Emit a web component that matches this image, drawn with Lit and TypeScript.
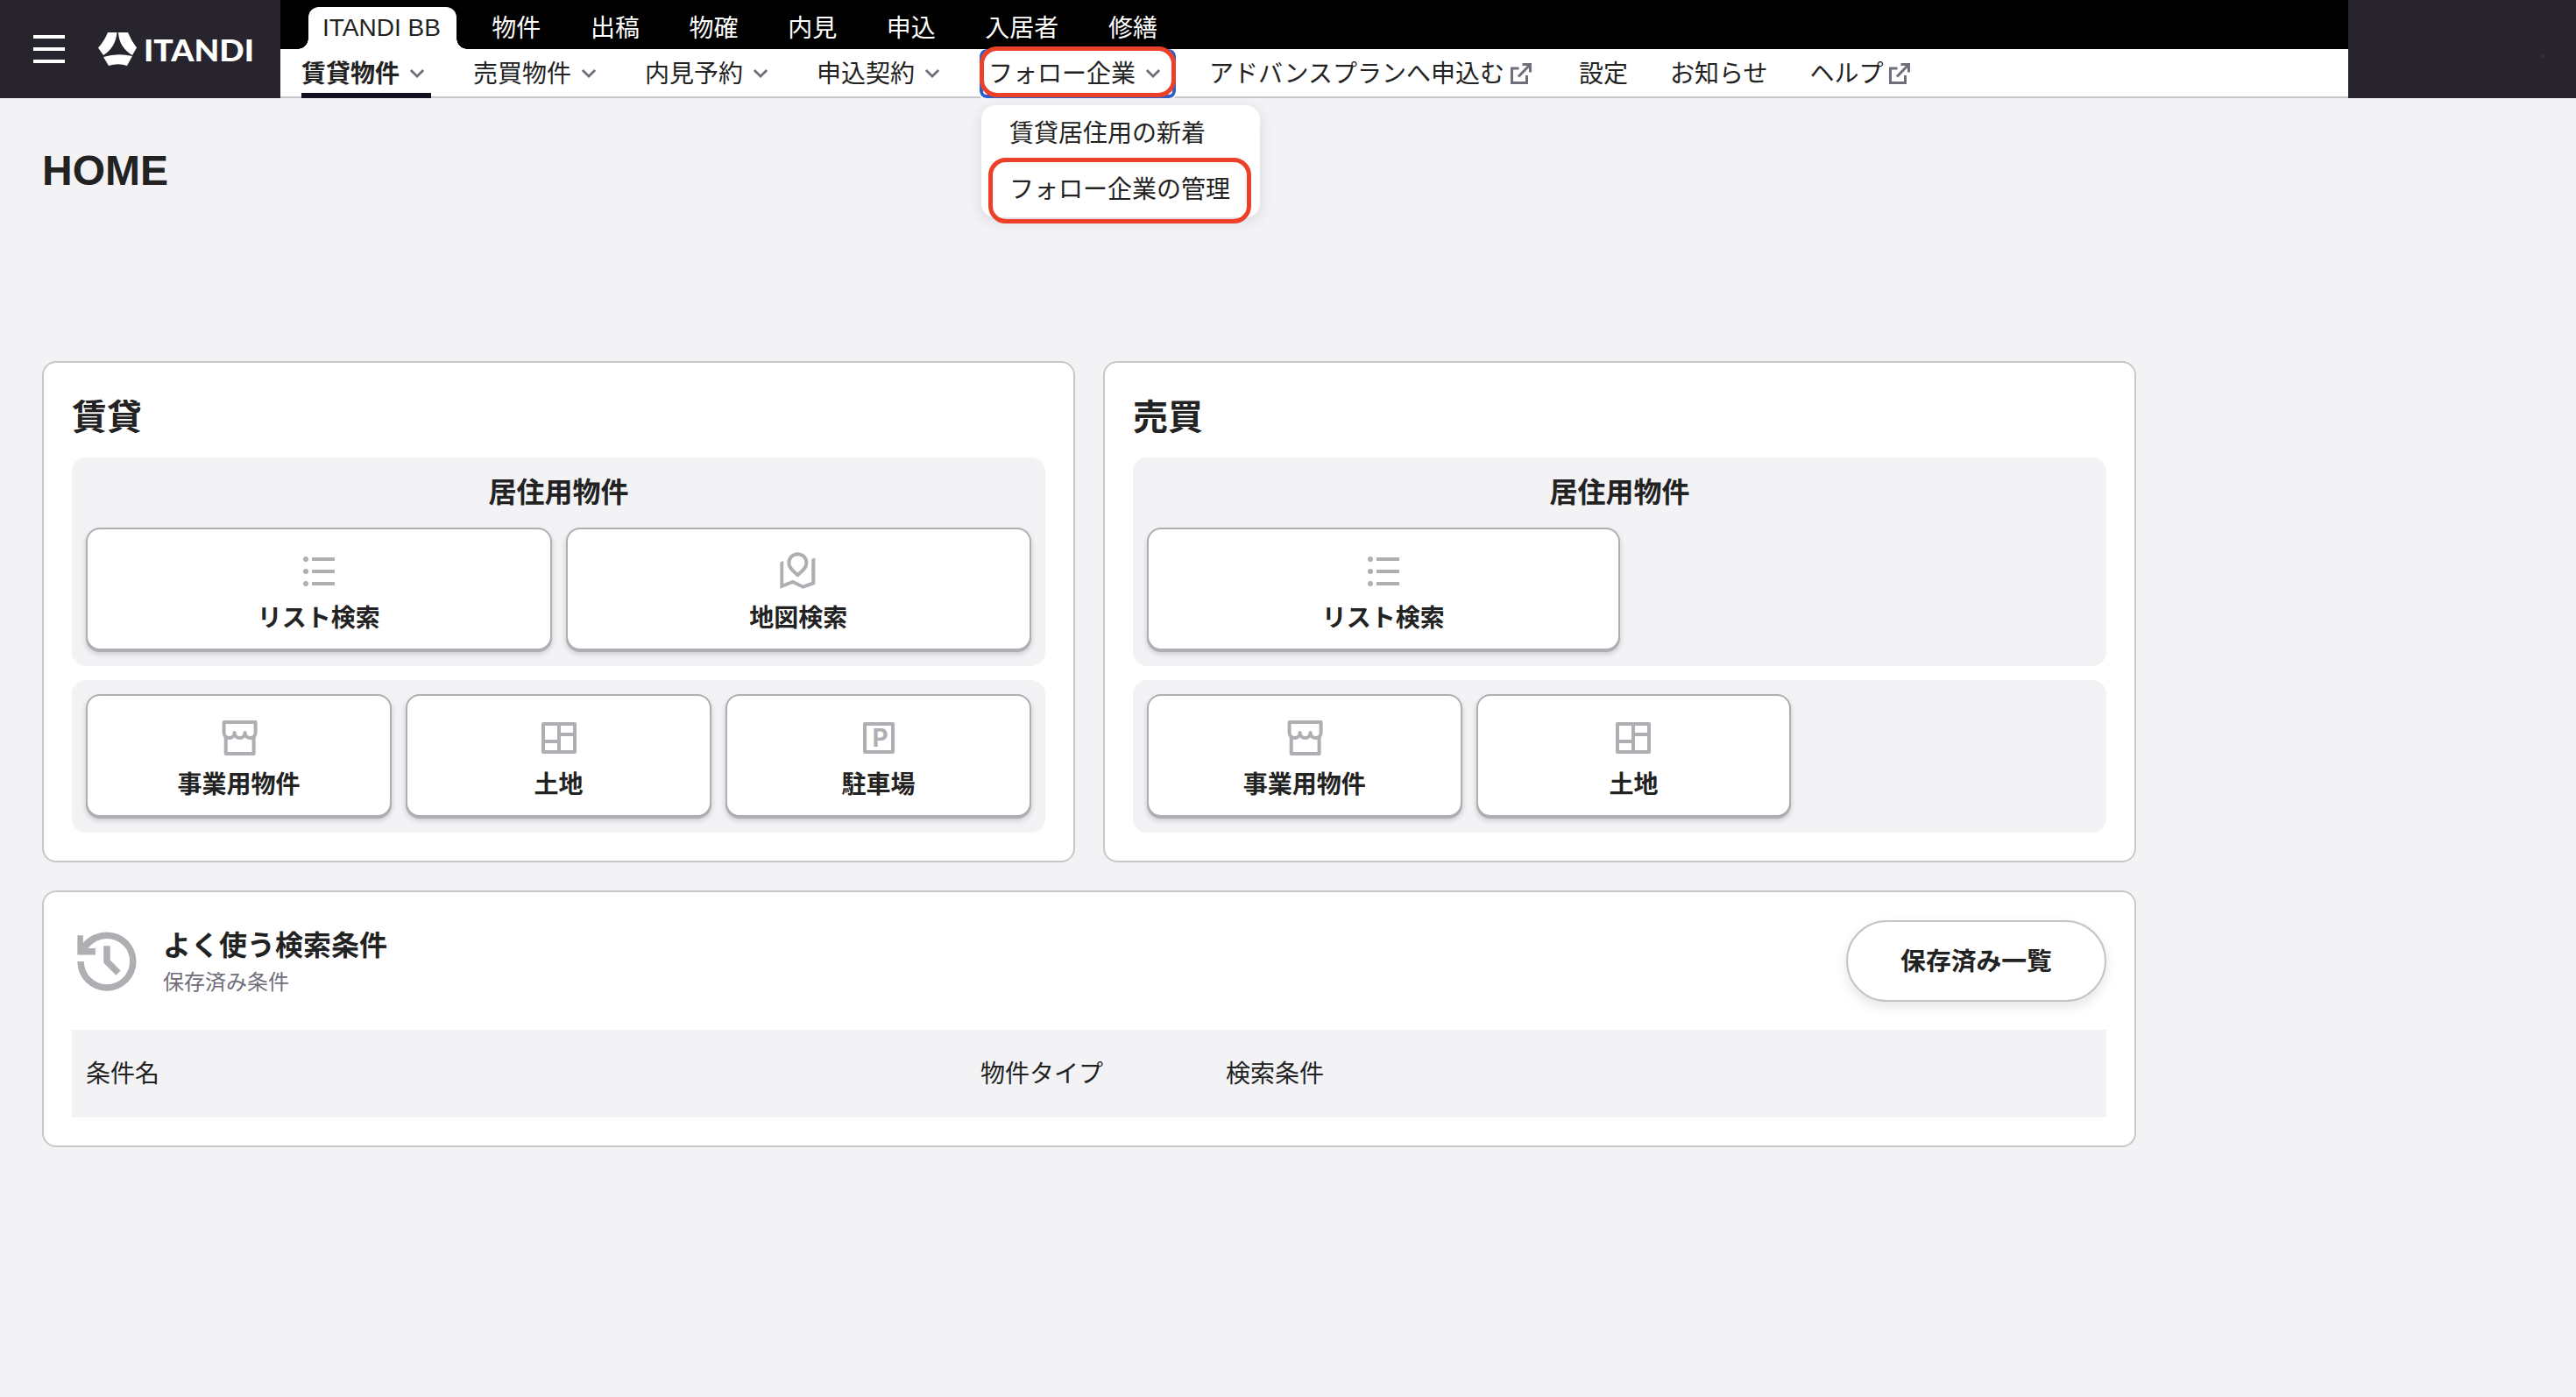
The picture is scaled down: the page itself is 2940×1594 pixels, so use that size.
import { LitElement, html, css, svg } from 'lit';
import { customElement, property } from 'lit/decorators.js';

const icons = {
  list: svg`
    <circle cx="9" cy="10" r="3" /><circle cx="9" cy="24" r="3" /><circle cx="9" cy="38" r="3" />
    <path d="M16 8h26v4H16zM16 22h26v4H16zM16 36h26v4H16z" />
  `,
  map: svg`
    <path class="line" d="M23.4 4.2c-5.8 0-10 4.5-10 10.2 0 5.8 4.6 8.6 10 13.8 5.4-5.2 10-8 10-13.8 0-5.7-4.2-10.2-10-10.2z" />
    <path d="M3.4 13.5l3.8-1.500v26l10.5-4.200 11.8 5.700 9.700-3.500V10l4.200-1.500v30.200l-13.900 5-11.800-5.700-14.300 5.700z" />
  `,
  store: svg`
    <path class="line" d="M6.6 6h36v12a6 6 0 0 1-12 0 6 6 0 0 1-12 0 6 6 0 0 1-12 0z" />
    <path class="line" d="M8.7 22v20h31.9V22" />
  `,
  land: svg`<path class="line" d="M6 8h36v32H6zM24 8v32M24 20h18M6 28h18" />`,
  parking: svg`
    <path class="line" d="M8 8h32v32H8z" />
    <text x="16.5" y="34">P</text>
  `
};

@customElement('menu-button')
export class MenuButton extends LitElement {
  @property() icon = 'list';
  @property() label = '';

  static styles = css`
    :host {
      display: flex;
      flex-direction: column;
      align-items: center;
      height: 140px;
      box-sizing: border-box;
      padding-top: 24px;
      border: 2px solid #aeaeb3;
      border-radius: 16px;
      background: #fff;
      box-shadow: 0 2px 0 #aeaeb3, 0 4px 6px rgba(0, 0, 0, 0.18);
      cursor: pointer;
    }

    svg {
      width: 48px;
      height: 48px;
      fill: #aeaeb3;
    }

    .line {
      fill: none;
      stroke: #aeaeb3;
      stroke-width: 4;
      stroke-linejoin: round;
    }

    text {
      font: 700 28px 'Inter', sans-serif;
    }

    .label {
      margin-top: 8px;
      font-size: 28px;
      line-height: 43px;
      font-weight: 700;
    }
  `;

  render() {
    return html`
      <svg viewBox="0 0 48 48">${icons[this.icon]}</svg>
      <span class="label">${this.label}</span>
    `;
  }
}

@customElement('app-header')
export class AppHeader extends LitElement {
  tabs = ['ITANDI BB', '物件', '出稿', '物確', '内見', '申込', '入居者', '修繕'];

  links = [
    { name: '賃貸物件', type: 'menu', active: true },
    { name: '売買物件', type: 'menu' },
    { name: '内見予約', type: 'menu' },
    { name: '申込契約', type: 'menu' },
    { name: 'フォロー企業', type: 'menu', children: ['賃貸居住用の新着', 'フォロー企業の管理'] },
    { name: 'アドバンスプランへ申込む', type: 'external' },
    { name: '設定' },
    { name: 'お知らせ' },
    { name: 'ヘルプ', type: 'external' }
  ];

  static styles = css`
    :host {
      display: flex;
      height: 112px;
      background: #27242e;
      font-size: 28px;
      white-space: nowrap;
    }

    .brand {
      display: flex;
      align-items: center;
      width: 320px;
      box-sizing: border-box;
      padding-left: 38px;
    }

    .burger {
      display: flex;
      flex-direction: column;
      gap: 10px;
      width: 36px;
      margin-right: 38px;
    }

    .burger i {
      height: 4px;
      background: #fff;
    }

    .logo {
      width: 180px;
      height: 40px;
      fill: #fff;
    }

    .logo text {
      font: 900 35px 'Lato', sans-serif;
    }

    .nav {
      flex: 1;
    }

    .tabs {
      display: flex;
      height: 48px;
      padding: 8px 0 0 32px;
      background: #000;
      color: #fff;
      line-height: 48px;
    }

    .tab {
      padding: 1px 28.3px 0;
    }

    .tab.active {
      position: relative;
      width: 169px;
      height: 48px;
      box-sizing: border-box;
      margin-right: 12px;
      padding: 0 0 0 16px;
      border-radius: 12px 12px 0 0;
      background: #fff;
      color: #222;
    }

    .tab.active::before,
    .tab.active::after {
      content: '';
      position: absolute;
      bottom: 0;
      width: 12px;
      height: 12px;
    }

    .tab.active::before {
      right: 100%;
      background: radial-gradient(circle at 0 0, transparent 11.5px, #fff 12px);
    }

    .tab.active::after {
      left: 100%;
      background: radial-gradient(circle at 100% 0, transparent 11.5px, #fff 12px);
    }

    .links {
      display: flex;
      gap: 48px;
      height: 56px;
      padding-left: 24px;
      background: #fff;
      box-shadow: inset 0 -2px #c8c7ce;
      line-height: 56px;
    }

    .link {
      position: relative;
      display: flex;
      align-items: center;
    }

    .link.active {
      font-weight: 700;
      box-shadow: inset 0 -6px #151020;
    }

    .link > span {
      padding-top: 2px;
    }

    .chevron {
      width: 24px;
      height: 24px;
      margin: 0 4px 0 8px;
      fill: none;
      stroke: #6f6e79;
      stroke-width: 2.7;
    }

    .external {
      width: 24px;
      height: 24px;
      margin: 0 6px 0 7px;
      fill: none;
      stroke: #6f6e79;
      stroke-width: 3;
    }

    .focus {
      position: absolute;
      inset: 0 -10px;
      border: 4px solid #2a5fcb;
      border-top-width: 2px;
      border-radius: 8px;
      outline: 2px solid #fff;
      clip-path: inset(0 -2px);
    }

    .mark {
      position: absolute;
      border: 5px solid #ec4128;
      border-radius: 20px;
    }

    .link > .mark {
      inset: -3px -10px 1px;
    }

    .menu {
      position: absolute;
      top: 64px;
      left: -8px;
      width: 318px;
      height: 127px;
      padding-top: 1px;
      border-radius: 16px;
      background: #fff;
      box-shadow: 0 4px 16px rgba(30, 25, 50, 0.12);
      line-height: 64px;
    }

    .menu-item {
      position: relative;
      padding-left: 32px;
    }

    .menu-item .mark {
      inset: -5px 10px -6px 8px;
    }

    .side {
      display: flex;
      align-items: flex-start;
      justify-content: flex-end;
      width: 260px;
      box-sizing: border-box;
      padding: 62px 37px 0 0;
    }

    .side i {
      width: 1px;
      height: 4px;
      background: #4b4853;
    }
  `;

  render() {
    return html`
      <div class="brand">
        <div class="burger"><i></i><i></i><i></i></div>
        <svg class="logo" viewBox="0 0 180 40">
          <path d="M11 1h10.5q-1.500 17-15.500 26L0 18.500Q7 11 11 1z" />
          <path d="M23 1h11q4 10 10 17.500L39 27Q24 18 23 1z" />
          <path d="M6 29q16-5 33-1l-6 11q-10-3.500-21 0z" />
          <text x="52" y="33.500" textLength="126" lengthAdjust="spacingAndGlyphs">ITANDI</text>
        </svg>
      </div>
      <div class="nav">
        <div class="tabs">
          ${this.tabs.map((tab, i) => html`<span class="tab ${i === 0 ? 'active' : ''}">${tab}</span>`)}
        </div>
        <div class="links">${this.links.map(link => this._renderLink(link))}</div>
      </div>
      <div class="side"><i></i></div>
    `;
  }

  _renderLink(link) {
    return html`
      <div class="link ${link.active ? 'active' : ''}">
        ${link.children ? html`<div class="focus"></div>` : ''}
        <span>${link.name}</span>
        ${link.type === 'menu' ? html`
          <svg class="chevron" viewBox="0 0 24 24"><path d="M4.8 8l7.2 7 7.2-7" /></svg>
        ` : ''}
        ${link.type === 'external' ? html`
          <svg class="external" viewBox="0 0 24 24">
            <path d="M9.500 6h-8v16.500h17V14M13.500 1.500h9V10.500M22 2L9 15.500" />
          </svg>
        ` : ''}
        ${link.children ? html`
          <div class="mark"></div>
          <div class="menu">
            ${link.children.map((name, i) => html`
              <div class="menu-item">${name}${i === 1 ? html`<div class="mark"></div>` : ''}</div>
            `)}
          </div>
        ` : ''}
      </div>
    `;
  }
}

@customElement('app-root')
export class AppRoot extends LitElement {
  cards = [
    {
      title: '賃貸',
      groups: [
        {
          name: '居住用物件',
          layout: 'fill',
          items: [
            { icon: 'list', label: 'リスト検索' },
            { icon: 'map', label: '地図検索' }
          ]
        },
        {
          layout: 'fill',
          items: [
            { icon: 'store', label: '事業用物件' },
            { icon: 'land', label: '土地' },
            { icon: 'parking', label: '駐車場' }
          ]
        }
      ]
    },
    {
      title: '売買',
      groups: [
        {
          name: '居住用物件',
          layout: 'half',
          items: [{ icon: 'list', label: 'リスト検索' }]
        },
        {
          layout: 'third',
          items: [
            { icon: 'store', label: '事業用物件' },
            { icon: 'land', label: '土地' }
          ]
        }
      ]
    }
  ];

  static styles = css`
    :host {
      display: block;
      min-height: 100vh;
      background: #f3f3f6;
      color: #222;
      font-family: 'Liberation Sans', 'Noto Sans CJK JP', sans-serif;
    }

    main {
      width: 2390px;
      padding: 48px 0 0 48px;
    }

    h1 {
      margin: 0 0 183px;
      font-size: 48px;
      line-height: 69px;
    }

    h2 {
      margin: 0 0 16px;
      font-size: 40px;
      line-height: 60px;
    }

    h3 {
      margin: 0 0 16px;
      font-size: 32px;
      line-height: 48px;
      text-align: center;
    }

    .cards {
      display: flex;
      gap: 32px;
      margin-bottom: 32px;
    }

    .card {
      flex: 1;
      box-sizing: border-box;
      padding: 32px;
      border: 2px solid #c8c8ca;
      border-radius: 16px;
      background: #fff;
    }

    .group {
      padding: 16px 16px 18px;
      border-radius: 16px;
      background: #f3f3f6;
    }

    .group + .group {
      margin-top: 16px;
    }

    .buttons {
      display: flex;
      gap: 16px;
    }

    .fill menu-button {
      flex: 1;
    }

    .half menu-button {
      width: 50%;
    }

    .third menu-button {
      width: 33.333%;
    }

    .saved-head {
      display: flex;
      align-items: center;
      height: 93px;
      margin-bottom: 32px;
    }

    .history {
      width: 80px;
      height: 80px;
      margin-right: 24px;
      fill: #aeaeb3;
    }

    .saved-title {
      flex: 1;
    }

    .saved-title h3 {
      margin: 0;
      text-align: left;
    }

    .saved-title p {
      margin: 0;
      color: #6f6e79;
      font-size: 24px;
      line-height: 36px;
    }

    .pill {
      width: 297px;
      height: 93px;
      padding: 0 0 4px;
      border: 2px solid #c5c5c7;
      border-radius: 47px;
      background: #fff;
      box-shadow: 0 6px 14px rgba(0, 0, 0, 0.1);
      color: inherit;
      font: 700 28.8px 'Liberation Sans', 'Noto Sans CJK JP', sans-serif;
    }

    .columns {
      display: grid;
      grid-template-columns: 1021px 280px 1fr;
      padding: 2px 0 0 16px;
      background: #f3f3f6;
      font-size: 28px;
      line-height: 98px;
    }
  `;

  render() {
    return html`
      <app-header></app-header>
      <main>
        <h1>HOME</h1>
        <div class="cards">
          ${this.cards.map(card => html`
            <section class="card">
              <h2>${card.title}</h2>
              ${card.groups.map(group => this._renderGroup(group))}
            </section>
          `)}
        </div>
        <section class="card">
          <div class="saved-head">
            <svg class="history" viewBox="52 -909 857 857">
              <path d="M480-120q-150 0-255-105T120-480h80q0 117 81.5 198.5T480-200q117 0 198.5-81.5T760-480q0-117-81.5-198.5T480-760q-69 0-129 32t-101 88h90v80H120v-240h70v94q51-64 129.5-99T480-840q75 0 140.5 28.5t114 77q48.5 48.5 77 114T840-480q0 75-28.5 140.5t-77 114q-48.5 48.5-114 77T480-120Zm112-192L440-464v-206h80v174l128 128-56 56Z" />
            </svg>
            <div class="saved-title">
              <h3>よく使う検索条件</h3>
              <p>保存済み条件</p>
            </div>
            <button class="pill">保存済み一覧</button>
          </div>
          <div class="columns">
            <span>条件名</span>
            <span>物件タイプ</span>
            <span>検索条件</span>
          </div>
        </section>
      </main>
    `;
  }

  _renderGroup(group) {
    return html`
      <div class="group">
        ${group.name ? html`<h3>${group.name}</h3>` : ''}
        <div class="buttons ${group.layout}">
          ${group.items.map(item => html`
            <menu-button .icon=${item.icon} .label=${item.label}></menu-button>
          `)}
        </div>
      </div>
    `;
  }
}
